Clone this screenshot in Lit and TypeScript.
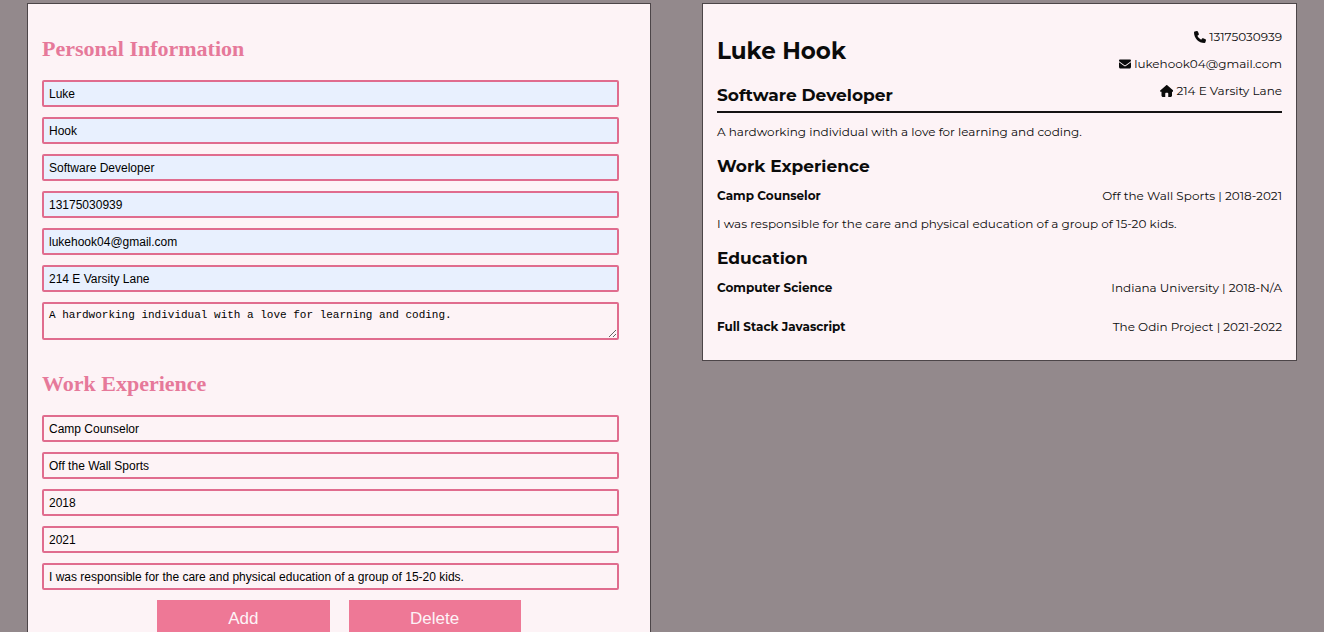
import { LitElement, html, css, svg } from "lit";
import { customElement, property } from "lit/decorators.js";
import { classMap } from "lit/directives/class-map.js";

interface Field {
  id: string;
  label: string;
  value: string;
  type?: string;
  filled?: boolean;
}

const personal: Field[] = [
  { id: "first", label: "First name", value: "Luke", filled: true },
  { id: "last", label: "Last name", value: "Hook", filled: true },
  { id: "title", label: "Title", value: "Software Developer", filled: true },
  { id: "phone", label: "Phone number", value: "13175030939", type: "tel", filled: true },
  { id: "email", label: "Email", value: "lukehook04@gmail.com", type: "email", filled: true },
  { id: "address", label: "Address", value: "214 E Varsity Lane", filled: true },
];

const work: Field[] = [
  { id: "position", label: "Position", value: "Camp Counselor" },
  { id: "company", label: "Company", value: "Off the Wall Sports" },
  { id: "from", label: "From", value: "2018" },
  { id: "to", label: "To", value: "2021" },
  {
    id: "duties",
    label: "Description",
    value: "I was responsible for the care and physical education of a group of 15-20 kids.",
  },
];

const summary = "A hardworking individual with a love for learning and coding.";

const phoneIcon = svg`<path d="M164.9 24.6c-7.700-18.600-28-28.500-47.400-23.200l-88 24C12.100 30.200 0 46 0 64c0 247.400 200.600 448 448 448 18 0 33.800-12.100 38.600-29.500l24-88c5.300-19.400-4.600-39.700-23.200-47.400l-96-40c-16.300-6.800-35.200-2.100-46.300 11.600L304.700 368C234.300 334.700 177.300 277.700 144 207.300L193.300 167c13.700-11.200 18.400-30 11.600-46.300l-40-96z"/>`;
const mailIcon = svg`<path d="M48 64C21.500 64 0 85.500 0 112c0 15.100 7.100 29.300 19.200 38.400L236.800 313.600c11.400 8.500 27 8.500 38.400 0L492.800 150.400c12.100-9.100 19.200-23.300 19.200-38.400 0-26.500-21.500-48-48-48H48zM0 176V384c0 35.300 28.700 64 64 64H448c35.300 0 64-28.700 64-64V176L294.400 339.200c-22.800 17.100-54 17.100-76.800 0L0 176z"/>`;
const homeIcon = svg`<path d="M575.800 255.500c0 18-15 32.100-32 32.100h-32l.7 160.200c0 35.300-28.700 64.200-64 64.200H352V360c0-17.700-14.300-32-32-32h-64c-17.700 0-32 14.300-32 32v152H128.100c-35.300 0-64-28.700-64-64V287.600H32c-18 0-32-14-32-32.100 0-9 3-17 10-24L266.400 8c7-7 15-8 22-8s15 2 21 7L564.800 231.500c8 7 12 15 11 24z"/>`;

@customElement("resume-form")
class ResumeForm extends LitElement {
  static styles = css`
    :host {
      display: block;
      box-sizing: border-box;
      padding: 1px 14px 24px;
      border: 1px solid #4c4548;
      background: #fdf3f6;
    }
    .section {
      padding-top: 31px;
    }
    .title {
      margin: 0 0 18px;
      font: bold 22px/26px "Liberation Serif", serif;
      color: #e6799a;
    }
    .fields {
      display: grid;
      gap: 10px;
      padding-right: 17px;
    }
    .input {
      box-sizing: border-box;
      width: 100%;
      height: 27px;
      margin: 0;
      padding: 0 5px;
      border: 2px solid #e06c8e;
      border-radius: 2px;
      background: transparent;
      color: #000;
      font: 12px/16px "Liberation Sans", sans-serif;
    }
    .filled {
      background: #e8f0fe;
    }
    .area {
      display: block;
      height: 38px;
      padding: 3px 5px;
      font: 11px/16px "Liberation Mono", monospace;
      resize: vertical;
      overflow: hidden;
    }
    .buttons {
      display: flex;
      justify-content: center;
      gap: 19px;
      margin-top: 10px;
    }
    .button {
      width: 29%;
      height: 38px;
      padding: 0;
      border: 0;
      background: #ee7896;
      color: #fdf3f6;
      font: 17px/20px "Liberation Sans", sans-serif;
    }
  `;

  private field(f: Field) {
    return html`<input
      class=${classMap({ input: true, filled: !!f.filled })}
      id=${f.id}
      aria-label=${f.label}
      type=${f.type ?? "text"}
      .value=${f.value}
    />`;
  }

  render() {
    return html`
      <section class="section">
        <h2 class="title">Personal Information</h2>
        <div class="fields">
          ${personal.map((f) => this.field(f))}
          <textarea class="input area" id="summary" aria-label="Summary" .value=${summary}></textarea>
        </div>
      </section>
      <section class="section">
        <h2 class="title">Work Experience</h2>
        <div class="fields">${work.map((f) => this.field(f))}</div>
        <div class="buttons">
          <button class="button" type="button">Add</button>
          <button class="button" type="button">Delete</button>
        </div>
      </section>
    `;
  }
}

@customElement("resume-entry")
class ResumeEntry extends LitElement {
  @property() position = "";
  @property() place = "";
  @property() details = "";

  static styles = css`
    :host {
      display: block;
    }
    .row {
      display: flex;
      justify-content: space-between;
      gap: 16px;
    }
    .name,
    .text {
      margin: 0;
      font-size: 12px;
      line-height: 16px;
    }
    .name {
      font-weight: 700;
    }
    .details {
      margin-top: 12px;
    }
  `;

  render() {
    return html`
      <div class="row">
        <h4 class="name">${this.position}</h4>
        <p class="text">${this.place}</p>
      </div>
      ${this.details ? html`<p class="text details">${this.details}</p>` : null}
    `;
  }
}

@customElement("resume-preview")
class ResumePreview extends LitElement {
  static styles = css`
    :host {
      display: block;
      box-sizing: border-box;
      padding: 25px 14px;
      border: 1px solid #4c4548;
      background: #fdf3f6;
      color: #0b0b0b;
      font: 12px/16px Montserrat, sans-serif;
    }
    .header {
      display: flex;
      justify-content: space-between;
      align-items: flex-start;
      padding-bottom: 5px;
      border-bottom: 2px solid #151314;
    }
    .who {
      display: grid;
      gap: 18px;
      padding-top: 7px;
    }
    .name,
    .heading,
    .text {
      margin: 0;
    }
    .name {
      font-size: 23px;
      line-height: 30px;
    }
    .heading {
      font-size: 17px;
      line-height: 22px;
    }
    .contact {
      display: grid;
      gap: 11px;
      justify-items: end;
    }
    .line {
      display: flex;
      align-items: center;
      gap: 3px;
    }
    .icon {
      height: 12px;
      fill: currentColor;
    }
    .body {
      display: grid;
      margin-top: 11px;
    }
    .body .heading {
      margin: 15px 0 11px;
    }
    .entries {
      display: grid;
      gap: 23px;
    }
  `;

  render() {
    return html`
      <header class="header">
        <div class="who">
          <h1 class="name">Luke Hook</h1>
          <h2 class="heading">Software Developer</h2>
        </div>
        <div class="contact">
          <div class="line">
            <svg class="icon" viewBox="0 0 512 512" aria-hidden="true">${phoneIcon}</svg>13175030939
          </div>
          <div class="line">
            <svg class="icon" viewBox="0 0 512 512" aria-hidden="true">${mailIcon}</svg>lukehook04@gmail.com
          </div>
          <div class="line">
            <svg class="icon" viewBox="0 0 576 512" aria-hidden="true">${homeIcon}</svg>214 E Varsity Lane
          </div>
        </div>
      </header>
      <div class="body">
        <p class="text">${summary}</p>
        <h3 class="heading">Work Experience</h3>
        <resume-entry
          position="Camp Counselor"
          place="Off the Wall Sports | 2018-2021"
          details=${work[4].value}
        ></resume-entry>
        <h3 class="heading">Education</h3>
        <div class="entries">
          <resume-entry position="Computer Science" place="Indiana University | 2018-N/A"></resume-entry>
          <resume-entry position="Full Stack Javascript" place="The Odin Project | 2021-2022"></resume-entry>
        </div>
      </div>
    `;
  }
}

@customElement("app-root")
class AppRoot extends LitElement {
  static styles = css`
    :host {
      display: grid;
      grid-template-columns: minmax(0, 624fr) minmax(0, 595fr);
      align-items: start;
      gap: 51px;
      box-sizing: border-box;
      height: 100vh;
      overflow: hidden;
      padding: 3px 27px 0;
      background: #93898c;
    }
  `;

  render() {
    return html`<resume-form></resume-form><resume-preview></resume-preview>`;
  }
}
